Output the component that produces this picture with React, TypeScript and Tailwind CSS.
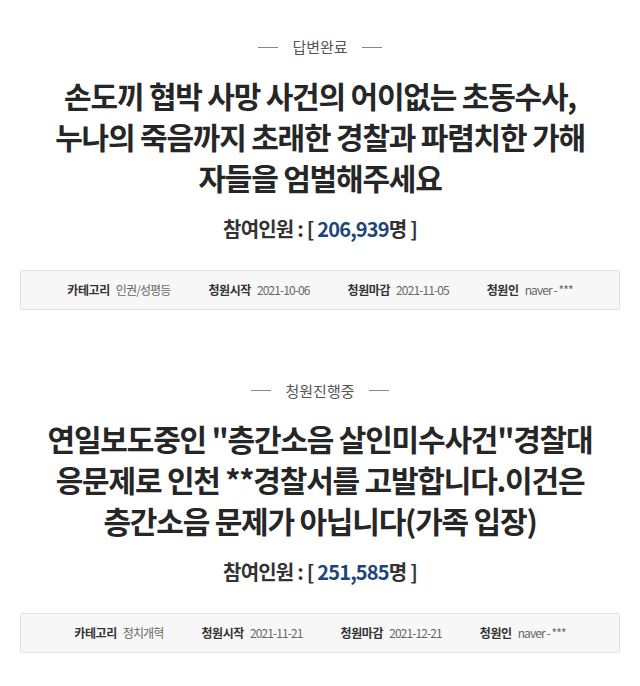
import React from "react";

type Petition = {
  status: string;
  title: string[];
  count: string;
  category: string;
  start: string;
  end: string;
  author: string;
};

const petitions: Petition[] = [
  {
    status: "답변완료",
    title: ["손도끼 협박 사망 사건의 어이없는 초동수사,", "누나의 죽음까지 초래한 경찰과 파렴치한 가해", "자들을 엄벌해주세요"],
    count: "206,939",
    category: "인권/성평등",
    start: "2021-10-06",
    end: "2021-11-05",
    author: "naver - ***",
  },
  {
    status: "청원진행중",
    title: ['연일보도중인 "층간소음 살인미수사건"경찰대', "응문제로 인천 **경찰서를 고발합니다.이건은", "층간소음 문제가 아닙니다(가족 입장)"],
    count: "251,585",
    category: "정치개혁",
    start: "2021-11-21",
    end: "2021-12-21",
    author: "naver - ***",
  },
];

function Meta({ label, value }: { label: string; value: string }) {
  return (
    <div className="flex items-baseline gap-[6px]">
      <span className="font-bold tracking-[-0.4px] text-[#333]">{label}</span>
      <span className="tracking-[-0.9px] text-[#666]">{value}</span>
    </div>
  );
}

function PetitionHead({ p }: { p: Petition }) {
  return (
    <section className="flex flex-col items-center">
      <div className="flex items-center gap-[14px] text-[15px] text-[#555]">
        <span className="h-px w-[20px] bg-[#888]" />
        <span>{p.status}</span>
        <span className="h-px w-[20px] bg-[#888]" />
      </div>
      <h2 className="mt-[16px] text-center text-[30px] font-bold leading-[41px] tracking-[-1.2px] text-[#262626]">
        {p.title.map((line) => (
          <div key={line}>{line}</div>
        ))}
      </h2>
      <p className="mt-[16px] text-[20px] font-bold tracking-[-0.8px] text-[#333]">
        참여인원 : [ <span className="text-[#1d4577]">{p.count}</span>명 ]
      </p>
      <div className="mt-[26px] flex h-[40px] w-[600px] items-center justify-center gap-[38px] rounded-[2px] border border-[#e2e2e2] bg-[#f7f7f7] text-[12px]">
        <Meta label="카테고리" value={p.category} />
        <Meta label="청원시작" value={p.start} />
        <Meta label="청원마감" value={p.end} />
        <Meta label="청원인" value={p.author} />
      </div>
    </section>
  );
}

export default function App() {
  return (
    <div className="flex min-h-[686px] w-[640px] flex-col gap-[70px] bg-white pt-[36px] font-['Noto_Sans_CJK_KR','Noto_Sans',sans-serif]">
      {petitions.map((p) => (
        <PetitionHead key={p.status} p={p} />
      ))}
    </div>
  );
}
